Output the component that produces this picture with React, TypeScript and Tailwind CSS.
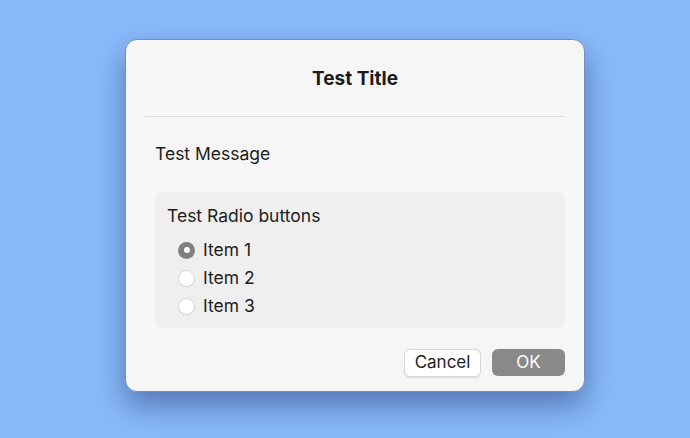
import React from "react";

const items = ["Item 1", "Item 2", "Item 3"];

function Radio({ checked }: { checked: boolean }) {
  if (checked) {
    return (
      <span className="flex h-[17px] w-[17px] items-center justify-center rounded-full bg-[#7f7f7f]">
        <span className="h-[6px] w-[6px] rounded-full bg-white" />
      </span>
    );
  }
  return <span className="h-[17px] w-[17px] rounded-full border border-[#d6d6d6] bg-white shadow-[0_0.5px_1px_rgba(0,0,0,0.08)]" />;
}

export default function App() {
  return (
    <div
      className="flex h-[438px] w-[690px] items-start bg-[#89b9fb] pt-[39px] pl-[125px]"
      style={{ fontFamily: "Inter, 'Noto Sans', sans-serif" }}
    >
      <div className="flex h-[353px] w-[460px] flex-col rounded-[12px] border border-[#6f8fbf] bg-[#f6f6f6] px-[19px] shadow-[0_14px_30px_rgba(20,40,90,0.45)]">
        <div className="flex h-[76px] items-center justify-center pt-[2px] text-[19px] font-bold text-[#1b1b1b]">
          Test Title
        </div>
        <div className="h-px bg-[#dcdcdc]" />
        <div className="flex flex-col pl-[10px]">
          <div className="mt-[25px] text-[17.5px] leading-[24px] text-[#1d1d1d]">Test Message</div>
          <div className="mt-[26px] flex h-[136px] flex-col rounded-[8px] bg-[#efefef] px-[12px] pt-[12px]">
            <div className="text-[17.5px] leading-[24px] text-[#1d1d1d]">Test Radio buttons</div>
            <div className="mt-[12px] flex flex-col gap-[8px] pl-[11px]">
              {items.map((it, i) => (
                <div key={it} className="flex h-[20px] items-center gap-[8px] text-[17.5px] text-[#1d1d1d]">
                  <Radio checked={i === 0} />
                  <span>{it}</span>
                </div>
              ))}
            </div>
          </div>
        </div>
        <div className="mt-[21px] flex justify-end gap-[11px]">
          <button className="h-[28px] w-[77px] rounded-[6px] border border-[#d8d8d8] bg-white text-[17px] text-[#1d1d1d] shadow-[0_0.5px_1px_rgba(0,0,0,0.12)]">
            Cancel
          </button>
          <button className="h-[27px] w-[73px] rounded-[6px] bg-[#898989] text-[17px] text-white">
            OK
          </button>
        </div>
      </div>
    </div>
  );
}
